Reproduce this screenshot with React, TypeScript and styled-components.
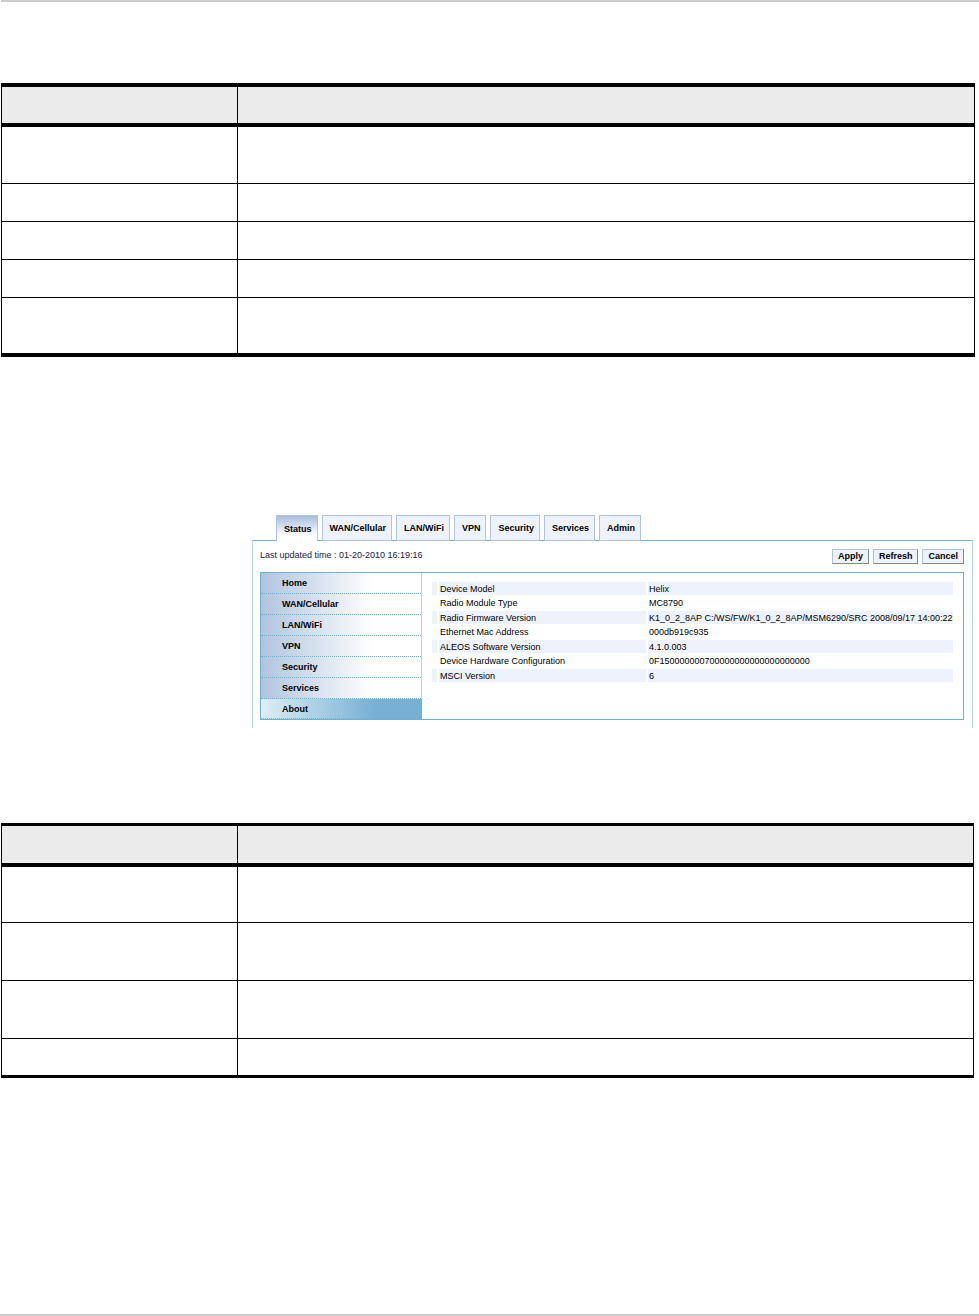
import React from "react";
import styled, { createGlobalStyle, css } from "styled-components";

const GlobalStyle = createGlobalStyle`
  *, *::before, *::after { box-sizing: border-box; }
  body {
    margin: 0;
    background: #fff;
    color: #000;
    font-family: "Liberation Sans", Arial, sans-serif;
    font-size: 9px;
    line-height: 12px;
  }
`;

const Page = styled.div`
  display: flex;
  flex-direction: column;
  min-height: 100vh;
`;

const Rule = styled.hr<{ $footer?: boolean }>`
  width: ${(p) => (p.$footer ? "100%" : "calc(100% - 1px)")};
  height: 2px;
  margin: ${(p) => (p.$footer ? "auto 0 0" : "0 0 81px 1px")};
  border: 0;
  background: #ccc;
`;

const TableFrame = styled.div<{ $right: number }>`
  padding: 0 ${(p) => p.$right}px 0 1px;
`;

const DocTable = styled.table<{ $edge: number }>`
  width: 100%;
  table-layout: fixed;
  border-collapse: separate;
  border-spacing: 0;
  border: 0 solid #000;
  border-width: ${(p) => p.$edge}px 0;

  th, td {
    padding: 0;
    border: 0 solid #000;
    border-right-width: 1px;
  }
  th {
    background: #ebebeb;
    border-bottom-width: 4px;
  }
  th:first-child, td:first-child {
    width: 237px;
    border-left-width: 1px;
  }
  tbody tr:not(:last-child) td { border-bottom-width: 1px; }
`;

const DocRow = styled.tr<{ $height: number }>`
  height: ${(p) => p.$height}px;
`;

const Console = styled.section`
  margin: 158px 6px 95px 252px;
`;

const TabBar = styled.nav`
  display: flex;
  gap: 4px;
  padding-left: 24px;
  margin-bottom: -1px;
`;

const Tab = styled.a<{ $active?: boolean }>`
  position: relative;
  height: 26px;
  padding: 0 5px 0 7px;
  border: 1px solid #b0c4de;
  background: #eef2fc;
  color: #000;
  font-weight: bold;
  line-height: 24px;
  text-decoration: none;
  white-space: nowrap;
  ${(p) =>
    p.$active &&
    css`
      border-bottom: 0;
      background: linear-gradient(#a9bedc, #fff 80%);
      line-height: 26px;
    `}
`;

const Panel = styled.div`
  padding: 8px 8px 8px 7px;
  border: 1px solid #b4d6e8;
  border-top-color: #72b0d0;
  border-bottom: 0;
`;

const Toolbar = styled.div`
  display: flex;
  justify-content: space-between;
  align-items: flex-start;
  height: 23px;
  color: #20204a;
`;

const Buttons = styled.div`
  display: flex;
  gap: 4px;
`;

const Button = styled.button`
  height: 15px;
  padding: 0 5px;
  border: 1px solid;
  border-color: #b0c4de #7d9070 #7d9070 #b0c4de;
  background: #eef2fc;
  color: #000;
  font: bold 9px/13px "Liberation Sans", Arial, sans-serif;
`;

const Body = styled.div`
  display: flex;
  border: 1px solid #72b0d0;
`;

const Menu = styled.nav`
  flex: none;
  width: 161px;
  border-right: 1px solid #b4d6e8;
`;

const MenuItem = styled.a<{ $active?: boolean }>`
  display: block;
  height: 21px;
  padding-left: 21px;
  border-bottom: 1px dotted #72b0d0;
  background: linear-gradient(90deg, #b0c4de, #fff 70%);
  color: #000;
  font-weight: bold;
  line-height: 20px;
  text-decoration: none;
  ${(p) =>
    p.$active &&
    css`
      height: 20px;
      margin-right: -1px;
      background: linear-gradient(90deg, #deeef5, #78b0d4 70%);
    `}
`;

const Content = styled.div`
  flex: 1;
  padding: 7px 8px;
`;

const InfoTable = styled.table`
  width: 100%;
  table-layout: fixed;
  border-collapse: separate;
  border-spacing: 2px;
  line-height: 12px;

  th, td {
    height: 12px;
    padding: 0 0 0 1px;
    font-weight: normal;
    text-align: left;
    vertical-align: middle;
    white-space: nowrap;
  }
  tr:nth-child(odd) > * {
    height: 13px;
    background: #eef2fc;
  }
`;

const Col = styled.col<{ $width?: number }>`
  width: ${(p) => (p.$width ? `${p.$width}px` : "auto")};
`;

const tabs = ["Status", "WAN/Cellular", "LAN/WiFi", "VPN", "Security", "Services", "Admin"];
const menu = ["Home", "WAN/Cellular", "LAN/WiFi", "VPN", "Security", "Services", "About"];
const info = [
  ["Device Model", "Helix"],
  ["Radio Module Type", "MC8790"],
  ["Radio Firmware Version", "K1_0_2_8AP C:/WS/FW/K1_0_2_8AP/MSM6290/SRC 2008/09/17 14:00:22"],
  ["Ethernet Mac Address", "000db919c935"],
  ["ALEOS Software Version", "4.1.0.003"],
  ["Device Hardware Configuration", "0F150000000700000000000000000000"],
  ["MSCI Version", "6"],
];

interface BlankTableProps {
  edge: number;
  right: number;
  head: number;
  rows: number[];
}

function BlankTable({ edge, right, head, rows }: BlankTableProps) {
  return (
    <TableFrame $right={right}>
      <DocTable $edge={edge}>
        <thead>
          <DocRow $height={head}>
            <th scope="col" />
            <th scope="col" />
          </DocRow>
        </thead>
        <tbody>
          {rows.map((height, i) => (
            <DocRow key={i} $height={height}>
              <td />
              <td />
            </DocRow>
          ))}
        </tbody>
      </DocTable>
    </TableFrame>
  );
}

export default function App() {
  return (
    <Page>
      <GlobalStyle />
      <Rule />
      <BlankTable edge={4} right={4} head={40} rows={[57, 38, 38, 38, 55]} />
      <Console>
        <TabBar>
          {tabs.map((name) => (
            <Tab key={name} href="#" $active={name === "Status"}>
              {name}
            </Tab>
          ))}
        </TabBar>
        <Panel>
          <Toolbar>
            <span>Last updated time : 01-20-2010 16:19:16</span>
            <Buttons>
              <Button type="button">Apply</Button>
              <Button type="button">Refresh</Button>
              <Button type="button">Cancel</Button>
            </Buttons>
          </Toolbar>
          <Body>
            <Menu>
              {menu.map((name) => (
                <MenuItem key={name} href="#" $active={name === "About"}>
                  {name}
                </MenuItem>
              ))}
            </Menu>
            <Content>
              <InfoTable>
                <colgroup>
                  <Col $width={5} />
                  <Col $width={207} />
                  <Col />
                </colgroup>
                <tbody>
                  {info.map(([label, value]) => (
                    <tr key={label}>
                      <td />
                      <th scope="row">{label}</th>
                      <td>{value}</td>
                    </tr>
                  ))}
                </tbody>
              </InfoTable>
            </Content>
          </Body>
        </Panel>
      </Console>
      <BlankTable edge={3} right={5} head={41} rows={[56, 58, 58, 36]} />
      <Rule $footer />
    </Page>
  );
}
